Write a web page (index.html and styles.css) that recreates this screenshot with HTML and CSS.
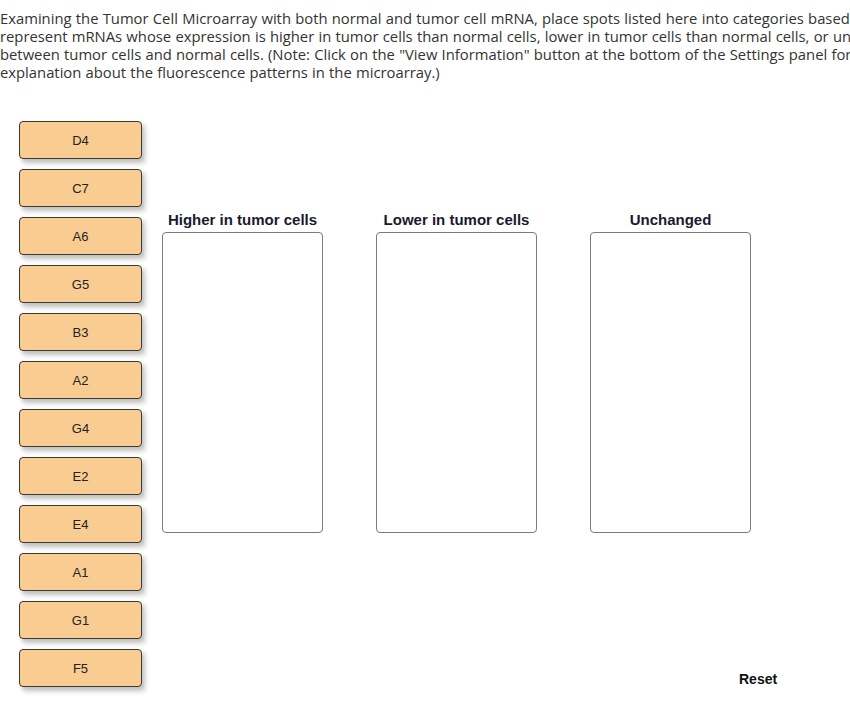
FILE: index.html
```html
<!DOCTYPE html>
<html>
<head>
<meta charset="utf-8">
<link rel="stylesheet" href="styles.css">
</head>
<body>
<div class="page">
  <p class="intro">
    <span class="line">Examining the Tumor Cell Microarray with both normal and tumor cell mRNA, place spots listed here into categories based</span>
    <span class="line">represent mRNAs whose expression is higher in tumor cells than normal cells, lower in tumor cells than normal cells, or unchanged</span>
    <span class="line">between tumor cells and normal cells. (Note: Click on the "View Information" button at the bottom of the Settings panel for</span>
    <span class="line">explanation about the fluorescence patterns in the microarray.)</span>
  </p>
  <div class="activity">
    <div class="tiles">
      <div class="tile">D4</div>
      <div class="tile">C7</div>
      <div class="tile">A6</div>
      <div class="tile">G5</div>
      <div class="tile">B3</div>
      <div class="tile">A2</div>
      <div class="tile">G4</div>
      <div class="tile">E2</div>
      <div class="tile">E4</div>
      <div class="tile">A1</div>
      <div class="tile">G1</div>
      <div class="tile">F5</div>
    </div>
    <div class="targets">
      <div class="bins">
        <div class="bin">
          <div class="bin-title">Higher in tumor cells</div>
          <div class="bin-box"></div>
        </div>
        <div class="bin">
          <div class="bin-title">Lower in tumor cells</div>
          <div class="bin-box"></div>
        </div>
        <div class="bin">
          <div class="bin-title">Unchanged</div>
          <div class="bin-box"></div>
        </div>
      </div>
      <div class="reset-row"><span class="reset">Reset</span></div>
    </div>
  </div>
</div>
</body>
</html>
```

FILE: styles.css
```css
html, body {
  margin: 0;
  padding: 0;
  background: #fff;
}
.page {
  width: 850px;
  height: 724px;
  overflow: hidden;
}
.intro {
  margin: 0;
  padding-top: 9px;
  font-family: "Open Sans", "Lato", sans-serif;
  font-size: 14.8px;
  word-spacing: 0.4px;
  line-height: 18px;
  color: #333;
  white-space: nowrap;
}
.line {
  display: block;
}
.activity {
  display: flex;
  margin-top: 40px;
}
.tiles {
  display: flex;
  flex-direction: column;
  gap: 10px;
  padding-left: 19px;
  width: 123px;
}
.tile {
  box-sizing: border-box;
  width: 123px;
  height: 38px;
  background: #f9cc92;
  border: 1px solid #3a3a3a;
  border-radius: 4px;
  box-shadow: 3px 4px 5px rgba(0, 0, 0, 0.25);
  display: flex;
  align-items: center;
  justify-content: center;
  font-family: "Liberation Sans", Arial, sans-serif;
  font-size: 13px;
  color: #222;
}
.targets {
  display: flex;
  flex-direction: column;
  justify-content: space-between;
  margin-left: 20px;
}
.bins {
  display: flex;
  gap: 53px;
  padding-top: 87px;
}
.bin {
  display: flex;
  flex-direction: column;
  align-items: center;
  width: 161px;
}
.bin-title {
  font-family: "Liberation Sans", Arial, sans-serif;
  font-weight: bold;
  font-size: 15px;
  color: #1a1a2e;
  height: 24px;
  line-height: 24px;
}
.bin-box {
  box-sizing: border-box;
  width: 161px;
  height: 301px;
  border: 1px solid #7a7a7a;
  border-radius: 4px;
  background: #fff;
}
.reset-row {
  display: flex;
  padding-left: 577px;
  padding-bottom: 0;
}
.reset {
  font-family: "Liberation Sans", Arial, sans-serif;
  font-weight: bold;
  font-size: 14px;
  line-height: 16px;
  color: #111;
}
```
